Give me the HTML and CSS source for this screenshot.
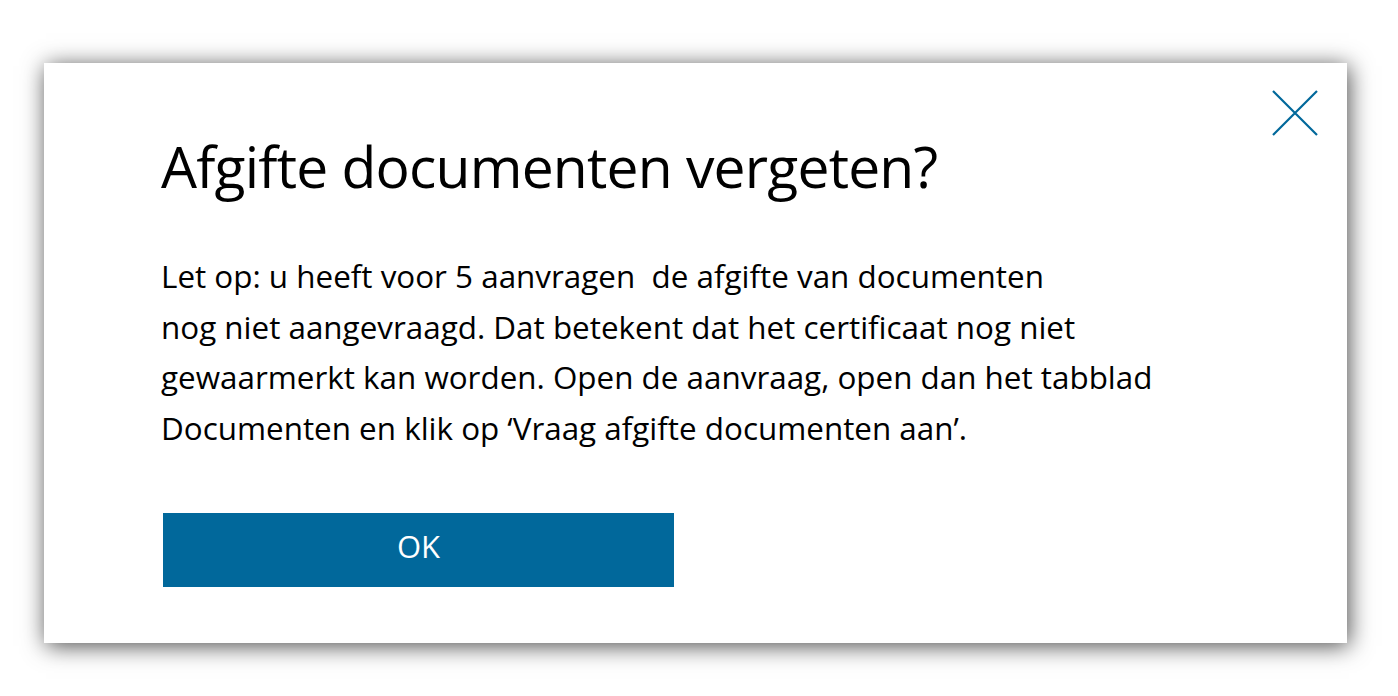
FILE: index.html
```html
<!DOCTYPE html>
<html lang="nl">
<head>
<meta charset="utf-8">
<title>Afgifte documenten vergeten?</title>
<link rel="stylesheet" href="styles.css">
</head>
<body>
<div class="page">
  <div class="dialog" role="dialog" aria-labelledby="dlg-title">
    <button class="close" aria-label="Sluiten">
      <svg width="46" height="46" viewBox="0 0 46 46" aria-hidden="true">
        <path d="M1 1 L45 45 M45 1 L1 45" stroke="#01689b" stroke-width="2.2" fill="none"/>
      </svg>
    </button>
    <h1 class="title" id="dlg-title">Afgifte documenten vergeten?</h1>
    <p class="text">Let op: u heeft voor 5 aanvragen&nbsp; de afgifte van documenten<br>nog niet aangevraagd. Dat betekent dat het certificaat nog niet<br>gewaarmerkt kan worden. Open de aanvraag, open dan het tabblad<br>Documenten en klik op ‘Vraag afgifte documenten aan’.</p>
    <button class="ok">OK</button>
  </div>
</div>
</body>
</html>
```
FILE: styles.css
```css
html, body {
  margin: 0;
  padding: 0;
  background: #ffffff;
}
.page {
  box-sizing: border-box;
  min-height: 696px;
  padding: 63px 0 53px 44px;
}
.dialog {
  position: relative;
  box-sizing: border-box;
  width: 1303px;
  height: 580px;
  background: #ffffff;
  box-shadow: 2px 3px 22px rgba(0, 0, 0, 0.7);
  padding: 68px 0 0 117px;
  display: flex;
  flex-direction: column;
  align-items: flex-start;
  font-family: "Open Sans", "Noto Sans", sans-serif;
  color: #000;
}
.close {
  position: absolute;
  top: 27px;
  right: 29px;
  width: 46px;
  height: 46px;
  padding: 0;
  border: 0;
  background: transparent;
  cursor: pointer;
}
.close svg {
  display: block;
}
.title {
  margin: 0;
  font-size: 57px;
  letter-spacing: -0.8px;
  line-height: 70px;
  font-weight: 400;
}
.text {
  margin: 50px 0 0 0;
  font-size: 31.4px;
  line-height: 50.5px;
  font-weight: 400;
}
.ok {
  margin: 60px 0 0 2px;
  width: 511px;
  height: 74px;
  padding: 0 0 8px 0;
  border: 0;
  background: #01689b;
  color: #ffffff;
  font-family: "Open Sans", "Noto Sans", sans-serif;
  font-size: 31px;
  cursor: pointer;
}
```
